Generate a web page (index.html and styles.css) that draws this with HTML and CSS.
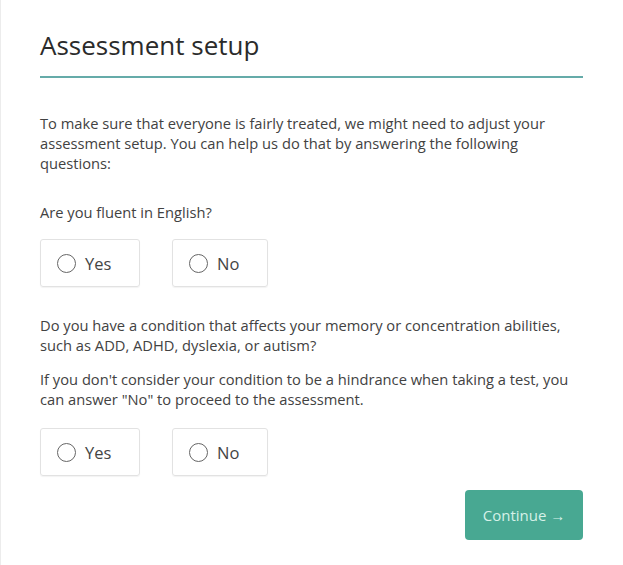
FILE: index.html
```html
<!DOCTYPE html>
<html lang="en">
<head>
<meta charset="utf-8">
<title>Assessment setup</title>
<link rel="stylesheet" href="styles.css">
</head>
<body>
<main class="page">
  <h1 class="title">Assessment setup</h1>
  <p class="intro">To make sure that everyone is fairly treated, we might need to adjust your assessment setup. You can help us do that by answering the following questions:</p>

  <section class="question q1">
    <p class="q-text">Are you fluent in English?</p>
    <div class="options">
      <label class="option opt-yes"><span class="radio"></span><span>Yes</span></label>
      <label class="option opt-no"><span class="radio"></span><span>No</span></label>
    </div>
  </section>

  <section class="question q2">
    <p class="q-text">Do you have a condition that affects your memory or concentration abilities, such as ADD, ADHD, dyslexia, or autism?</p>
    <p class="q-text note">If you don't consider your condition to be a hindrance when taking a test, you can answer "No" to proceed to the assessment.</p>
    <div class="options">
      <label class="option opt-yes"><span class="radio"></span><span>Yes</span></label>
      <label class="option opt-no"><span class="radio"></span><span>No</span></label>
    </div>
  </section>

  <div class="actions">
    <button class="continue">Continue <span class="arrow">&rarr;</span></button>
  </div>
</main>
</body>
</html>
```
FILE: styles.css
```css
html, body {
  margin: 0;
  padding: 0;
  background: #ffffff;
}
body {
  font-family: "Open Sans", "Noto Sans", sans-serif;
  color: #424242;
  border-left: 1px solid #ececec;
  min-height: 565px;
  box-sizing: border-box;
}
.page {
  width: 543px;
  padding: 27px 0 0 39px;
}
.title {
  margin: 0;
  font-size: 26px;
  font-weight: 400;
  color: #2b2b2b;
  line-height: 36px;
  padding-bottom: 13px;
  border-bottom: 2px solid #65aba9;
}
.intro {
  margin: 35px 0 0;
  font-size: 14.7px;
  line-height: 20px;
}
.q-text {
  margin: 0;
  font-size: 14.7px;
  line-height: 20px;
}
.q1 {
  margin-top: 29px;
}
.q2 {
  margin-top: 28px;
}
.note {
  margin-top: 14px;
}
.options {
  display: flex;
  gap: 32px;
  margin-top: 17px;
}
.q2 .options {
  margin-top: 19px;
}
.option {
  display: flex;
  align-items: center;
  gap: 9px;
  height: 48px;
  box-sizing: border-box;
  border: 1px solid #e2e2e2;
  border-radius: 3px;
  padding-left: 16px;
  font-size: 16.5px;
  color: #444;
  box-shadow: 0 1px 1px rgba(0,0,0,0.05);
}
.opt-yes { width: 100px; }
.opt-no { width: 96px; }
.radio {
  width: 19px;
  height: 19px;
  box-sizing: border-box;
  border: 1.6px solid #666;
  border-radius: 50%;
}
.actions {
  display: flex;
  justify-content: flex-end;
  margin-top: 14px;
}
.continue {
  width: 118px;
  height: 50px;
  background: #48a892;
  color: #d6f1e8;
  border: none;
  border-radius: 4px;
  font-family: "Open Sans", "Noto Sans", sans-serif;
  font-size: 15px;
  padding: 0;
}
.arrow {
  font-size: 15px;
}
```
